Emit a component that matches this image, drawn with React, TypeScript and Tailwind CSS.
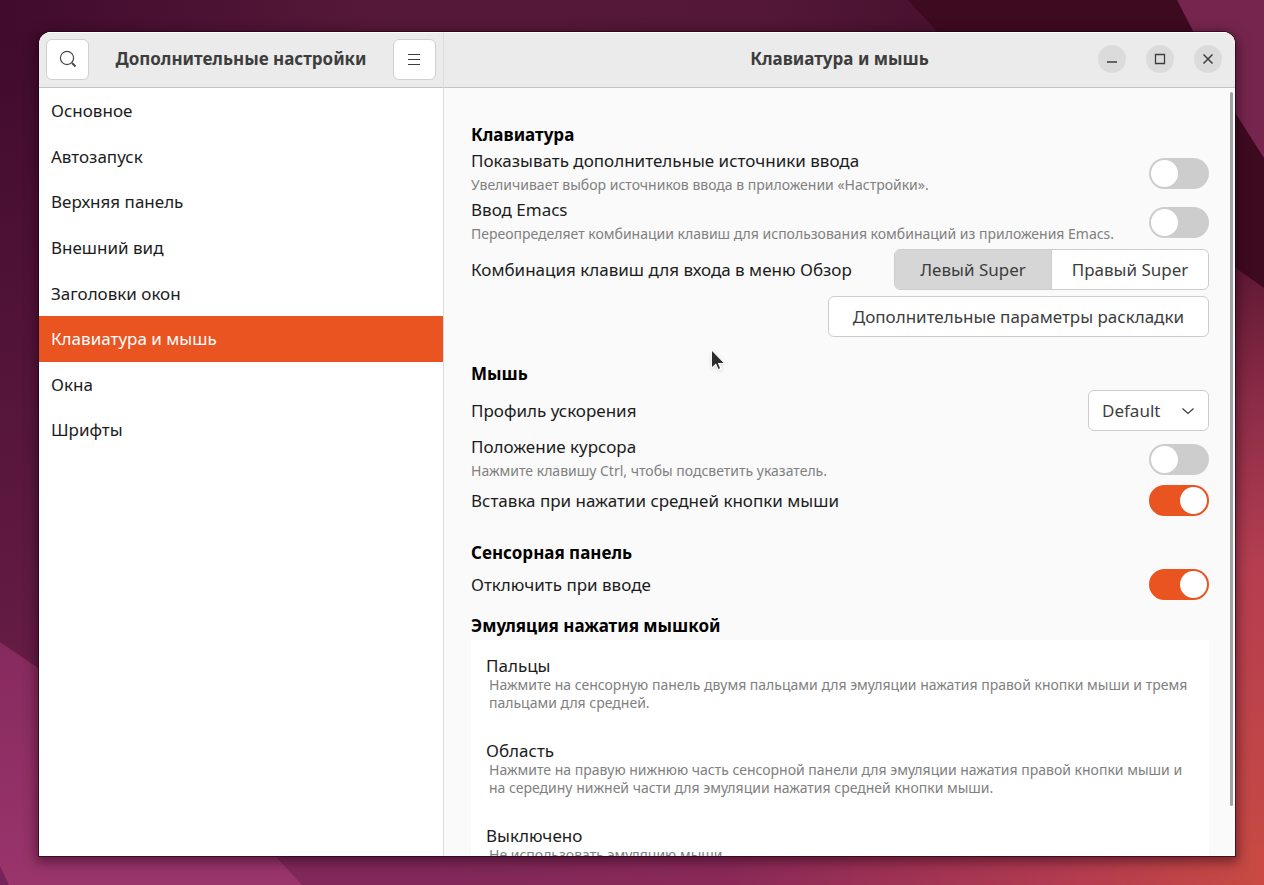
import React, { useState } from "react";

const navItems = [
  "Основное",
  "Автозапуск",
  "Верхняя панель",
  "Внешний вид",
  "Заголовки окон",
  "Клавиатура и мышь",
  "Окна",
  "Шрифты",
];

const clickMethods = [
  {
    title: "Пальцы",
    text: "Нажмите на сенсорную панель двумя пальцами для эмуляции нажатия правой кнопки мыши и тремя пальцами для средней.",
  },
  {
    title: "Область",
    text: "Нажмите на правую нижнюю часть сенсорной панели для эмуляции нажатия правой кнопки мыши и на середину нижней части для эмуляции нажатия средней кнопки мыши.",
  },
  {
    title: "Выключено",
    text: "Не использовать эмуляцию мыши.",
  },
];

const Wallpaper = () => (
  <svg
    className="absolute inset-0 h-full w-full"
    viewBox="0 0 1264 885"
    preserveAspectRatio="none"
    aria-hidden="true"
  >
    <defs>
      <linearGradient id="top" x1="0" y1="0" x2="1" y2="0">
        <stop offset="0" stopColor="#400b2d" />
        <stop offset="0.3" stopColor="#561838" />
        <stop offset="0.6" stopColor="#541737" />
        <stop offset="0.72" stopColor="#4a1230" />
        <stop offset="1" stopColor="#4a1230" />
      </linearGradient>
      <linearGradient id="left" x1="0" y1="0" x2="0" y2="1">
        <stop offset="0" stopColor="#400b2d" />
        <stop offset="1" stopColor="#691e48" />
      </linearGradient>
      <linearGradient id="leftLight" x1="0" y1="0" x2="0" y2="1">
        <stop offset="0" stopColor="#862a5e" />
        <stop offset="1" stopColor="#9a356c" />
      </linearGradient>
      <linearGradient id="right" x1="0" y1="0" x2="0" y2="1">
        <stop offset="0" stopColor="#581530" />
        <stop offset="0.25" stopColor="#8c2c48" />
        <stop offset="0.5" stopColor="#b43e50" />
        <stop offset="1" stopColor="#c84a42" />
      </linearGradient>
      <linearGradient id="bottom" x1="0" y1="0" x2="1" y2="0">
        <stop offset="0.22" stopColor="#80285a" />
        <stop offset="0.5" stopColor="#8a2958" />
        <stop offset="0.8" stopColor="#b03a50" />
        <stop offset="1" stopColor="#c84a42" />
      </linearGradient>
    </defs>
    <rect width="1264" height="885" fill="url(#top)" />
    <path d="M908 0H1264V300H1200V110L945 40Z" fill="#3e0a20" />
    <rect y="32" width="600" height="700" fill="url(#left)" />
    <path d="M1200 243 1264 288V885H1200Z" fill="url(#right)" />
    <rect x="200" y="845" width="1064" height="40" fill="url(#bottom)" />
    <path d="M0 642 38 668 265 845 302 885H0Z" fill="url(#leftLight)" />
    <path d="M0 866 9 885H0Z" fill="#74245a" />
    <path d="M1177 0H1264V158L1236 114Z" fill="#76264e" />
  </svg>
);

const Pointer = () => (
  <svg
    className="pointer-events-none absolute top-[317px] left-[671px] h-6 w-4 drop-shadow"
    viewBox="0 0 16 24"
    aria-hidden="true"
  >
    <path
      d="M2 2V19L6 15.500 9 21.500 11.500 20.500 9 14.500H14Z"
      fill="#fff"
      stroke="#fff"
    />
    <path d="M2 2V18L6 14.500 8.500 20 10 19.300 7.800 14H13.500Z" fill="#2b2b2b" />
  </svg>
);

const Toggle = ({ id, initial = false }: { id: string; initial?: boolean }) => {
  const [on, setOn] = useState(initial);

  return (
    <input
      id={id}
      type="checkbox"
      role="switch"
      checked={on}
      onChange={() => setOn(!on)}
      className="h-[31px] w-[60px] shrink-0 cursor-pointer appearance-none rounded-full border-2 border-[#cdcdcd] bg-[#cdcdcd] before:block before:size-[27px] before:rounded-full before:bg-white checked:border-[#e95420] checked:bg-[#e95420] checked:before:ml-[29px]"
    />
  );
};

const ToggleRow = ({
  id,
  label,
  hint,
  initial,
}: {
  id: string;
  label: string;
  hint?: string;
  initial?: boolean;
}) => (
  <div className="flex items-center justify-between gap-4">
    <label htmlFor={id} className="min-w-0">
      <span className="block leading-6">{label}</span>
      {hint && (
        <span className="block text-sm leading-6 text-[#808080]">{hint}</span>
      )}
    </label>
    <Toggle id={id} initial={initial} />
  </div>
);

export default function App() {
  const [active, setActive] = useState("Клавиатура и мышь");
  const [side, setSide] = useState("left");

  return (
    <div className="relative flex h-screen overflow-hidden bg-[#561838] pt-8 pr-[29px] pb-[29px] pl-[39px] font-['Noto_Sans',sans-serif] text-[17px] text-[#1c1c1c]">
      <Wallpaper />
      <div className="relative flex min-w-0 flex-1 overflow-hidden rounded-t-xl bg-white shadow-[0_0_0_1px_rgba(30,0,20,0.6),0_3px_12px_3px_rgba(30,0,15,0.5)]">
        <aside className="flex w-[405px] shrink-0 flex-col border-r border-[#dcdcdc]">
          <header className="flex h-14 shrink-0 items-center justify-between border-t border-b border-t-white border-b-[#c4c4c4] bg-[#ebebeb] px-[7px] pb-0.5">
            <button
              aria-label="Поиск"
              className="flex h-[41px] w-[43px] items-center justify-center rounded-md border border-[#d0d0d0] bg-white"
            >
              <svg
                className="size-[18px]"
                viewBox="0 0 18 18"
                fill="none"
                stroke="#4a4a4a"
                strokeWidth="1.200"
              >
                <circle cx="8" cy="8" r="6.600" />
                <path d="m13 13 3.500 3.500" strokeWidth="2" />
              </svg>
            </button>
            <h1 className="font-bold text-[#3d3d3d]">
              Дополнительные настройки
            </h1>
            <button
              aria-label="Меню"
              className="flex h-[41px] w-[43px] items-center justify-center rounded-md border border-[#d0d0d0] bg-white"
            >
              <svg className="h-3 w-3" viewBox="0 0 12 12" stroke="#3d3d3d">
                <path d="M0 1.500H12M0 6.500H12M0 11.500H12" />
              </svg>
            </button>
          </header>
          <nav className="grid h-[365px] grid-rows-8">
            {navItems.map((item) => (
              <button
                key={item}
                onClick={() => setActive(item)}
                className={
                  item === active
                    ? "bg-[#e95420] px-3 text-left text-white"
                    : "px-3 text-left"
                }
              >
                {item}
              </button>
            ))}
          </nav>
        </aside>

        <main className="flex min-w-0 flex-1 flex-col bg-[#fafafa]">
          <header className="flex h-14 shrink-0 items-center border-t border-b border-t-white border-b-[#c4c4c4] bg-[#ebebeb] pr-[13px] pb-0.5">
            <h2 className="flex-1 pl-[137px] text-center font-bold text-[#3d3d3d]">
              Клавиатура и мышь
            </h2>
            <div className="flex gap-5">
              <button
                aria-label="Свернуть"
                className="flex size-7 items-center justify-center rounded-full bg-[#dbdbdb]"
              >
                <svg className="size-3" viewBox="0 0 12 12" stroke="#3d3d3d">
                  <path d="M1 9H11" strokeWidth="1.500" />
                </svg>
              </button>
              <button
                aria-label="Развернуть"
                className="flex size-7 items-center justify-center rounded-full bg-[#dbdbdb]"
              >
                <svg
                  className="size-3"
                  viewBox="0 0 12 12"
                  fill="none"
                  stroke="#3d3d3d"
                >
                  <path d="M1.500 1.500H10.500V10.500H1.500Z" strokeWidth="1.300" />
                </svg>
              </button>
              <button
                aria-label="Закрыть"
                className="flex size-7 items-center justify-center rounded-full bg-[#dbdbdb]"
              >
                <svg className="size-3" viewBox="0 0 12 12" stroke="#3d3d3d">
                  <path d="M1.500 1.500 10.500 10.500M10.500 1.500 1.500 10.500" strokeWidth="1.500" />
                </svg>
              </button>
            </div>
          </header>

          <div className="min-h-0 flex-1 overflow-y-auto pt-[35px] pr-[26px] pl-[27px] [scrollbar-width:none]">
            <h3 className="leading-6 font-bold text-black">Клавиатура</h3>
            <div className="mt-0.5 flex flex-col gap-px">
              <ToggleRow
                id="sources"
                label="Показывать дополнительные источники ввода"
                hint="Увеличивает выбор источников ввода в приложении «Настройки»."
              />
              <ToggleRow
                id="emacs"
                label="Ввод Emacs"
                hint="Переопределяет комбинации клавиш для использования комбинаций из приложения Emacs."
              />
            </div>
            <div className="mt-[3px] flex items-center justify-between">
              <span>Комбинация клавиш для входа в меню Обзор</span>
              <div className="flex h-[41px] overflow-hidden rounded-md border border-[#cdcdcd] bg-white text-[#3d3d3d]">
                <button
                  aria-pressed={side === "left"}
                  onClick={() => setSide("left")}
                  className="w-[157px] border-r border-[#cdcdcd] aria-pressed:bg-[#d6d6d6]"
                >
                  Левый Super
                </button>
                <button
                  aria-pressed={side === "right"}
                  onClick={() => setSide("right")}
                  className="w-[156px] aria-pressed:bg-[#d6d6d6]"
                >
                  Правый Super
                </button>
              </div>
            </div>
            <div className="mt-1.5 flex justify-end">
              <button className="h-[41px] rounded-md border border-[#cdcdcd] bg-white px-6 text-[#3d3d3d]">
                Дополнительные параметры раскладки
              </button>
            </div>

            <h3 className="mt-[25px] leading-6 font-bold text-black">Мышь</h3>
            <div className="mt-1 flex items-center justify-between">
              <label htmlFor="profile">Профиль ускорения</label>
              <div className="relative">
                <select
                  id="profile"
                  className="block h-[41px] w-[121px] appearance-none rounded-md border border-[#cdcdcd] bg-white px-[13px] text-[#3d3d3d]"
                >
                  <option>Default</option>
                  <option>Adaptive</option>
                  <option>Flat</option>
                </select>
                <svg
                  className="pointer-events-none absolute top-[17px] right-[14px] h-2 w-3.5"
                  viewBox="0 0 14 8"
                  fill="none"
                  stroke="#3d3d3d"
                  strokeWidth="1.200"
                >
                  <path d="m1.500 1.500 5.500 5 5.500-5" />
                </svg>
              </div>
            </div>
            <div className="mt-1">
              <ToggleRow
                id="locate"
                label="Положение курсора"
                hint="Нажмите клавишу Ctrl, чтобы подсветить указатель."
              />
            </div>
            <div className="mt-0.5">
              <ToggleRow
                id="paste"
                label="Вставка при нажатии средней кнопки мыши"
                initial
              />
            </div>

            <h3 className="mt-[25px] leading-6 font-bold text-black">
              Сенсорная панель
            </h3>
            <div className="mt-1">
              <ToggleRow id="typing" label="Отключить при вводе" initial />
            </div>

            <h3 className="mt-3.5 leading-6 font-bold text-black">
              Эмуляция нажатия мышкой
            </h3>
            <ul className="mt-0.5 bg-white pt-4">
              {clickMethods.map((method) => (
                <li key={method.title} className="px-[15px] pb-[29px]">
                  <p className="leading-5">{method.title}</p>
                  <p className="pl-[3px] text-sm leading-[18px] text-[#808080]">
                    {method.text}
                  </p>
                </li>
              ))}
            </ul>
          </div>
        </main>
        <div className="absolute top-[60px] right-0.5 bottom-[50px] w-[3px] rounded-full bg-[#a3a3a3]" />
        <Pointer />
      </div>
    </div>
  );
}
